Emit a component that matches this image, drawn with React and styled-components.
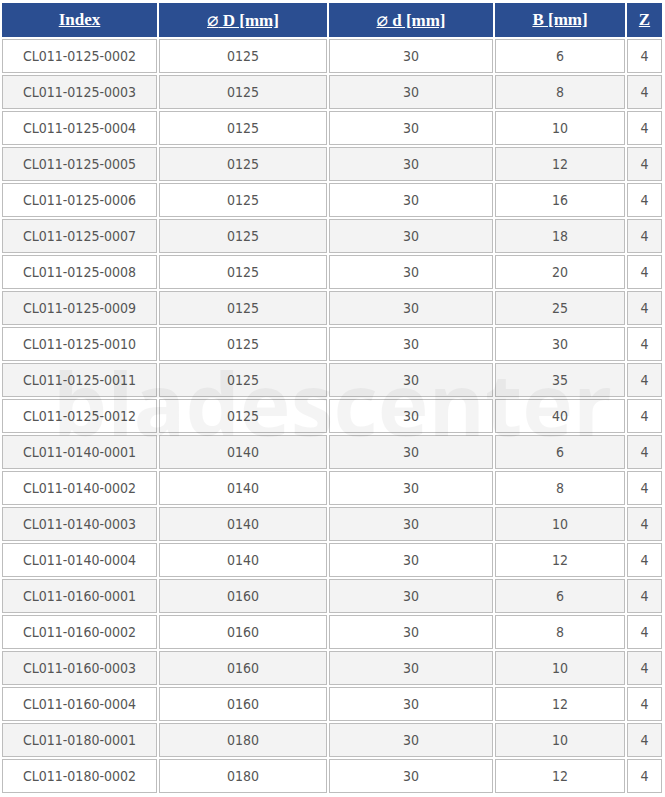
import React from 'react'
import styled, { createGlobalStyle } from 'styled-components'

const GlobalStyle = createGlobalStyle`
    body {
        margin: 0;
        background: #ffffff;
    }
`

const Wrapper = styled.div`
    position: relative;
    width: 665px;
    padding-top: 1px;
`

const Tabela = styled.table`
    border-collapse: separate;
    border-spacing: 2px;
    table-layout: fixed;
    width: 664px;
`

const Cabecalho = styled.th`
    height: 34px;
    padding: 0;
    background-color: #2b4e91;
    border: 1px solid #2b4e91;
    box-sizing: border-box;
    text-align: center;
    font-family: "Liberation Serif", serif;
    font-weight: bold;
    font-size: 17px;
`

const LinkCabecalho = styled.a`
    color: #ffffff;
    text-decoration: underline;
`

const Simbolo = styled.span`
    font-family: "DejaVu Sans", sans-serif;
    font-weight: normal;
    font-size: 19px;
    line-height: 1;
`

const Linha = styled.tr`
    background-color: ${props => props.$par ? '#f3f3f3' : '#ffffff'};
`

const Celula = styled.td`
    height: 34px;
    padding: 0;
    box-sizing: border-box;
    border: 1px solid #bdbdbd;
    text-align: center;
    font-family: "DejaVu Sans Condensed", "DejaVu Sans", sans-serif;
    font-stretch: condensed;
    font-size: 14px;
    color: #555555;
`

const MarcaDagua = styled.div`
    position: absolute;
    left: 0;
    top: 348px;
    width: 665px;
    text-align: center;
    font-family: "Open Sans", sans-serif;
    font-weight: bold;
    font-size: 86px;
    line-height: 110px;
    color: rgba(0, 0, 0, 0.045);
    pointer-events: none;
`

const dados = [
    ['CL011-0125-0002', '0125', '30', '6', '4'],
    ['CL011-0125-0003', '0125', '30', '8', '4'],
    ['CL011-0125-0004', '0125', '30', '10', '4'],
    ['CL011-0125-0005', '0125', '30', '12', '4'],
    ['CL011-0125-0006', '0125', '30', '16', '4'],
    ['CL011-0125-0007', '0125', '30', '18', '4'],
    ['CL011-0125-0008', '0125', '30', '20', '4'],
    ['CL011-0125-0009', '0125', '30', '25', '4'],
    ['CL011-0125-0010', '0125', '30', '30', '4'],
    ['CL011-0125-0011', '0125', '30', '35', '4'],
    ['CL011-0125-0012', '0125', '30', '40', '4'],
    ['CL011-0140-0001', '0140', '30', '6', '4'],
    ['CL011-0140-0002', '0140', '30', '8', '4'],
    ['CL011-0140-0003', '0140', '30', '10', '4'],
    ['CL011-0140-0004', '0140', '30', '12', '4'],
    ['CL011-0160-0001', '0160', '30', '6', '4'],
    ['CL011-0160-0002', '0160', '30', '8', '4'],
    ['CL011-0160-0003', '0160', '30', '10', '4'],
    ['CL011-0160-0004', '0160', '30', '12', '4'],
    ['CL011-0180-0001', '0180', '30', '10', '4'],
    ['CL011-0180-0002', '0180', '30', '12', '4'],
]

export default function App() {
    return (
        <Wrapper>
            <GlobalStyle />
            <Tabela>
                <colgroup>
                    <col style={{ width: 155 }} />
                    <col style={{ width: 168 }} />
                    <col style={{ width: 164 }} />
                    <col style={{ width: 130 }} />
                    <col style={{ width: 35 }} />
                </colgroup>
                <thead>
                    <tr>
                        <Cabecalho><LinkCabecalho href="#">Index</LinkCabecalho></Cabecalho>
                        <Cabecalho><LinkCabecalho href="#"><Simbolo>⌀</Simbolo> D [mm]</LinkCabecalho></Cabecalho>
                        <Cabecalho><LinkCabecalho href="#"><Simbolo>⌀</Simbolo> d [mm]</LinkCabecalho></Cabecalho>
                        <Cabecalho><LinkCabecalho href="#">B [mm]</LinkCabecalho></Cabecalho>
                        <Cabecalho><LinkCabecalho href="#">Z</LinkCabecalho></Cabecalho>
                    </tr>
                </thead>
                <tbody>
                    {dados.map((linha, i) => (
                        <Linha key={linha[0]} $par={i % 2 === 1}>
                            {linha.map((valor, j) => (
                                <Celula key={j}>{valor}</Celula>
                            ))}
                        </Linha>
                    ))}
                </tbody>
            </Tabela>
            <MarcaDagua>bladescenter</MarcaDagua>
        </Wrapper>
    )
}
